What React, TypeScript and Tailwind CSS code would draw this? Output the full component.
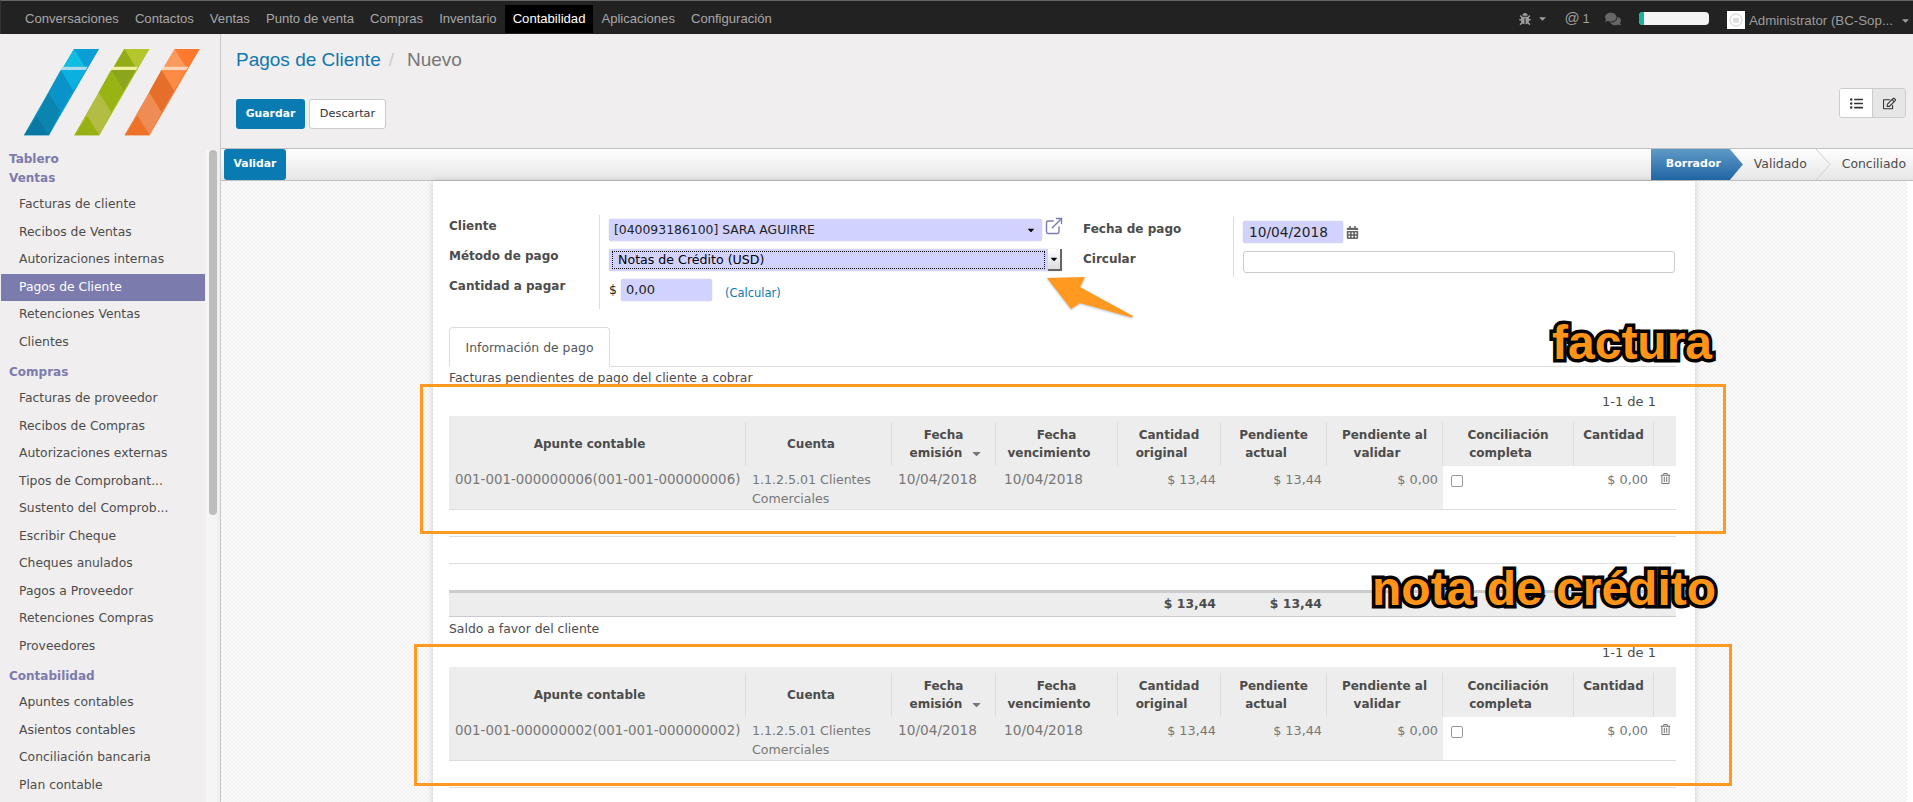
import { ExternalLink } from 'lucide-react'
import {
  FaBug,
  FaCalendarAlt,
  FaCaretDown,
  FaComments,
  FaListUl,
  FaRegEdit,
  FaRegTrashAlt,
} from 'react-icons/fa'

const topMenu = ['Conversaciones', 'Contactos', 'Ventas', 'Punto de venta', 'Compras', 'Inventario', 'Contabilidad', 'Aplicaciones', 'Configuración']

const sideMenu = [
  { title: 'Tablero', items: [] as string[] },
  { title: 'Ventas', items: ['Facturas de cliente', 'Recibos de Ventas', 'Autorizaciones internas', 'Pagos de Cliente', 'Retenciones Ventas', 'Clientes'] },
  {
    title: 'Compras',
    items: ['Facturas de proveedor', 'Recibos de Compras', 'Autorizaciones externas', 'Tipos de Comprobant...', 'Sustento del Comprob...', 'Escribir Cheque', 'Cheques anulados', 'Pagos a Proveedor', 'Retenciones Compras', 'Proveedores'],
  },
  { title: 'Contabilidad', items: ['Apuntes contables', 'Asientos contables', 'Conciliación bancaria', 'Plan contable'] },
]

// one stripe of the logo, drawn at the blue stripe's place and moved with dx
const LogoStripe = ({ dx, colors, band }: { dx: number; colors: string[]; band: string }) => (
  <g transform={`translate(${dx} 0)`}>
    <polygon points="162,15 237,15 87,274 12,274" fill={colors[4]} />
    <polygon points="162,15 237,15 203,68 195,68" fill={colors[1]} />
    <polygon points="162,15 195,68 130,68" fill={colors[0]} />
    <polygon points="122,78 197,78 160,140" fill={colors[2]} />
    <polygon points="122,78 160,140 122,205 85,145" fill={colors[3]} />
    <polygon points="85,145 122,205 87,274 50,215" fill={colors[5]} />
    <polygon points="50,215 87,274 12,274" fill={colors[6]} />
    <polygon points="85,145 50,215 12,274" fill={colors[7]} />
    <polygon points="128,68 203,68 197,78 122,78" fill={band} />
  </g>
)

const Logo = () => (
  <svg width="190" height="98" viewBox="0 0 570 294" className="ml-[19px] block">
    <LogoStripe dx={0} band="#a9dcea" colors={['#0fbde0', '#0a9dd6', '#0cb0e0', '#0a93c8', '#0aa2de', '#0a85b0', '#0a78a2', '#0a8cbc']} />
    <LogoStripe dx={151} band="#f0efa0" colors={['#93ab14', '#b4c52e', '#8ba61c', '#98b314', '#a6c01c', '#b3bd44', '#97b013', '#b2bd40']} />
    <LogoStripe dx={302} band="#fcd6b8" colors={['#fb9a5e', '#fd7a2d', '#fd8a45', '#e56f2a', '#f97c32', '#ef8c55', '#ee7129', '#ef8a50']} />
  </svg>
)

const Sidebar = () => (
  <div className="ml-px box-content w-[219px] shrink-0 border-r border-[#c8c8c8] bg-[#f0eeee] pt-[10px]">
    <Logo />
    <div className="mt-[8px] flex">
      <div className="w-[204px] shrink-0">
        {sideMenu.map((section, i) => (
          <div key={section.title} className={i > 1 ? 'pt-[7px]' : ''}>
            <div className="h-[19px] pl-[8px] text-[12px] leading-[19px] font-bold text-[#7c7bad]">{section.title}</div>
            {section.items.length > 0 && (
              <div className="mt-[3px]">
                {section.items.map((item) => (
                  <div
                    key={item}
                    className={
                      item === 'Pagos de Cliente'
                        ? 'h-[27.5px] bg-[#7c7bad] pl-[18px] text-[12.35px] leading-[27px] text-white'
                        : 'h-[27.5px] pl-[18px] text-[12.35px] leading-[27px] text-[#4c4c4c]'
                    }
                  >
                    {item}
                  </div>
                ))}
              </div>
            )}
          </div>
        ))}
      </div>
      <div className="ml-px h-[700px] w-[11px] bg-[#f6f5f5] pl-[3px]">
        <div className="h-[365px] w-[8px] rounded-[4px] bg-[#bdbdbd]" />
      </div>
    </div>
  </div>
)

const TopBar = () => (
  <div className="flex h-[34px] shrink-0 items-center border-t border-l border-[#666] border-l-[#333] bg-[#222] pt-[2px] pl-[16px] font-['Liberation_Sans',sans-serif] text-[13.1px] text-[#a8a8a8]">
    {topMenu.map((item) => (
      <div
        key={item}
        className={
          item === 'Contabilidad'
            ? 'flex h-[28px] items-center bg-black px-[8px] text-white'
            : 'flex h-[28px] items-center px-[8px]'
        }
      >
        {item}
      </div>
    ))}
    <div className="ml-auto flex items-center text-[#9d9d9d]">
      <FaBug size={12} />
      <FaCaretDown size={11} className="ml-[6px]" />
      <span className="ml-[16px] text-[15px]">@</span>
      <span className="ml-[3px]">1</span>
      <FaComments size={16} className="ml-[15px] text-[#666]" />
      <div className="ml-[18px] h-[13px] w-[70px] rounded-[4px] bg-[#f4f4f4]">
        <div className="h-[13px] w-[5px] rounded-l-[4px] bg-[#16b39a]" />
      </div>
      <div className="mt-[3px] ml-[18px] flex h-[18px] w-[18px] items-center justify-center bg-white">
        <svg width="14" height="14" viewBox="0 0 14 14">
          <circle cx="7" cy="7" r="6" fill="none" stroke="#e2e2e2" strokeWidth="1.5" />
          <rect x="4" y="5" width="6" height="4.5" fill="#dcdcdc" />
        </svg>
      </div>
      <span className="mt-[4px] ml-[4px] text-[13.3px]">Administrator (BC-Sop...</span>
      <FaCaretDown size={11} className="mt-[4px] mr-[2px] ml-[7px]" />
    </div>
  </div>
)

const ListCaret = () => <FaCaretDown size={10} className="text-black" />

const StatusBar = () => (
  <div className="flex h-[33px] shrink-0 items-center border-y border-[#c0c0c4] bg-gradient-to-b from-white to-[#e6e6e6]">
    <div className="ml-[3px] flex h-[31px] w-[62px] items-center justify-center rounded-[3px] bg-[#0a7ab3] text-[10.8px] font-bold text-white">
      Validar
    </div>
    <div className="ml-auto flex h-[31px] items-center text-[12.4px] text-[#4c4c4c]">
      <div className="flex h-[31px] w-[92px] items-center bg-gradient-to-b from-[#5f9ac6] to-[#1f65a4] pl-[15px] text-[11px] font-bold text-white [clip-path:polygon(0_0,calc(100%-13px)_0,100%_50%,calc(100%-13px)_100%,0_100%)]">
        Borrador
      </div>
      <span className="ml-[11px]">Validado</span>
      <svg width="16" height="31" viewBox="0 0 16 31" className="ml-[8px]">
        <polyline points="1,0 15,15.5 1,31" fill="none" stroke="#cfcfcf" />
      </svg>
      <span className="mr-[7px] ml-[11px]">Conciliado</span>
    </div>
  </div>
)

const PaymentForm = () => (
  <div className="flex pl-[16px]">
    <div className="mt-[34px] flex w-[634px] shrink-0">
      <div className="h-[94px] w-[151px] shrink-0 border-r border-[#ddd] text-[12px] font-bold text-[#4c4c4c]">
        <div className="h-[30px] leading-[22px]">Cliente</div>
        <div className="h-[30px] leading-[22px]">Método de pago</div>
        <div className="h-[30px] leading-[22px]">Cantidad a pagar</div>
      </div>
      <div className="pt-[4px] pl-[9px] text-[12.4px] text-[#222]">
        <div className="flex h-[30px] items-start">
          <div className="flex h-[22px] w-[433px] items-center justify-between rounded-[3px] bg-[#d2d2ff] pr-[6px] pl-[5px] shadow-[0_0_1px_#999]">
            [040093186100] SARA AGUIRRE
            <ListCaret />
          </div>
          <ExternalLink size={20} strokeWidth={1.7} className="-mt-[3px] ml-[2px] text-[#7c7bad]" />
        </div>
        <div className="flex h-[30px] items-start">
          <div className="flex h-[22px] w-[453px] items-center rounded-[3px] bg-[#d2d2ff] pl-[3px] shadow-[0_0_1px_#999]">
            <div className="h-[18px] w-[436px] border border-dotted border-black pl-[5px] text-[12.6px] leading-[16px] text-black">Notas de Crédito (USD)</div>
            <div className="ml-[3px] flex h-[22px] w-[14px] items-center justify-center border-r-2 border-b-2 border-[#666] bg-gradient-to-b from-white to-[#ddd]">
              <ListCaret />
            </div>
          </div>
        </div>
        <div className="flex h-[30px] items-start">
          <span className="w-[12px] leading-[22px]">$</span>
          <div className="h-[22px] w-[91px] rounded-[3px] bg-[#d2d2ff] pl-[5px] text-[13px] leading-[22px] shadow-[0_0_1px_#999]">0,00</div>
          <span className="ml-[13px] pt-[3px] text-[11.5px] leading-[22px] text-[#0a7ab3]">(Calcular)</span>
        </div>
      </div>
    </div>
    <div className="mt-[36px] flex">
      <div className="h-[60px] w-[151px] shrink-0 border-r border-[#ddd] text-[12px] font-bold text-[#4c4c4c]">
        <div className="h-[30px] leading-[24px]">Fecha de pago</div>
        <div className="h-[30px] leading-[24px]">Circular</div>
      </div>
      <div className="pt-[4px] pl-[9px] text-[13.7px] text-[#222]">
        <div className="flex h-[30px] items-start">
          <div className="h-[22px] w-[100px] rounded-[3px] bg-[#d2d2ff] pl-[6px] leading-[22px] shadow-[0_0_1px_#999]">10/04/2018</div>
          <FaCalendarAlt size={13} className="mt-[5px] ml-[3px] text-[#666]" />
        </div>
        <div className="h-[22px] w-[432px] rounded-[3px] border border-[#ccc] bg-white" />
      </div>
    </div>
  </div>
)

const colWidths = ['w-[297px]', 'w-[146px]', 'w-[104px]', 'w-[122px]', 'w-[103px]', 'w-[106px]', 'w-[116px]', 'w-[131px]', 'w-[80px]', 'w-[22px]']

const SortSlot = ({ show }: { show?: boolean }) => (
  <span className="ml-[4px] inline-block w-[11px] align-middle">
    {show && <FaCaretDown size={13} className="ml-[4px] text-[#777]" />}
  </span>
)

const HeadCell = ({ first, second, sort, last }: { first: string; second?: string; sort?: boolean; last?: boolean }) => (
  <th className="h-[50px] bg-[#ededed] p-0 font-bold">
    <div className={last ? 'mt-[6px] h-[44px]' : 'mt-[6px] flex h-[44px] flex-col justify-center border-r border-[#dcdcdc]'}>
      {second ? (
        <div className="text-center leading-[18px]">
          {first}
          <br />
          {second}
          <SortSlot show={sort} />
        </div>
      ) : (
        !last && (
          <div className="text-center leading-[18px]">
            {first}
            <SortSlot />
          </div>
        )
      )}
    </div>
  </th>
)

const PaymentTable = ({ docNumber, emptyRows, totals }: { docNumber: string; emptyRows: number; totals?: boolean }) => {
  const grey = 'h-[44px] border-b border-[#ddd] bg-[#ededed] p-0 pt-[4px] align-top leading-[19px] text-[#777]'
  const white = 'h-[44px] border-b border-[#ddd] bg-white p-0 pt-[4px] align-top leading-[19px] text-[#777]'

  return (
    <table className="w-[1227px] table-fixed border-separate border-spacing-0 text-[12px] text-[#4c4c4c]">
      <colgroup>
        {colWidths.map((width) => (
          <col key={width} className={width} />
        ))}
      </colgroup>
      <thead>
        <tr>
          <HeadCell first="Apunte contable" />
          <HeadCell first="Cuenta" />
          <HeadCell first="Fecha" second="emisión" sort />
          <HeadCell first="Fecha" second="vencimiento" />
          <HeadCell first="Cantidad" second="original" />
          <HeadCell first="Pendiente" second="actual" />
          <HeadCell first="Pendiente al" second="validar" />
          <HeadCell first="Conciliación" second="completa" />
          <th className="h-[50px] bg-[#ededed] p-0 font-bold">
            <div className="mt-[6px] h-[44px] border-r border-[#dcdcdc] pt-[4px] text-center leading-[18px]">Cantidad</div>
          </th>
          <HeadCell first="" last />
        </tr>
      </thead>
      <tbody>
        <tr>
          <td className={`${grey} pl-[6px] text-[13.4px] whitespace-nowrap`}>
            {docNumber}({docNumber})
          </td>
          <td className={`${grey} pl-[6px] text-[12.6px]`}>
            1.1.2.5.01 Clientes
            <br />
            Comerciales
          </td>
          <td className={`${grey} pl-[6px] text-[13.7px]`}>10/04/2018</td>
          <td className={`${grey} pl-[8px] text-[13.7px]`}>10/04/2018</td>
          <td className={`${grey} pr-[5px] text-right text-[12.8px]`}>$ 13,44</td>
          <td className={`${grey} pr-[5px] text-right text-[12.8px]`}>$ 13,44</td>
          <td className={`${grey} pr-[5px] text-right text-[12.8px]`}>$ 0,00</td>
          <td className={`${white} pl-[8px]`}>
            <div className="mt-[5px] h-[12px] w-[12px] rounded-[2px] border border-[#999] bg-white" />
          </td>
          <td className={`${white} pr-[6px] text-right text-[12.8px]`}>$ 0,00</td>
          <td className={`${white} pl-[6px]`}>
            <FaRegTrashAlt size={11} className="mt-[3px] text-[#777]" />
          </td>
        </tr>
        {Array.from({ length: emptyRows }).map((_, i) => (
          <tr key={i}>
            <td colSpan={10} className="h-[27px] border-b border-[#ddd] p-0" />
          </tr>
        ))}
      </tbody>
      {totals && (
        <tfoot>
          <tr>
            <td colSpan={10} className="h-[26px] p-0" />
          </tr>
          <tr className="bg-[#ededed] text-[12.4px] font-bold">
            <td colSpan={4} className="h-[27px] border-t-[3px] border-b border-t-[#ccc] border-b-[#ccc] p-0" />
            <td className="border-t-[3px] border-b border-t-[#ccc] border-b-[#ccc] p-0 pr-[5px] text-right">$ 13,44</td>
            <td className="border-t-[3px] border-b border-t-[#ccc] border-b-[#ccc] p-0 pr-[5px] text-right">$ 13,44</td>
            <td colSpan={4} className="border-t-[3px] border-b border-t-[#ccc] border-b-[#ccc] p-0" />
          </tr>
        </tfoot>
      )}
    </table>
  )
}

const Pager = () => <div className="mt-[4px] mb-[4px] h-[20px] pr-[20px] text-right text-[13px] leading-[20px] text-[#4c4c4c]">1-1 de 1</div>

const Sheet = () => (
  <div className="ml-[212px] h-[640px] w-[1262px] shrink-0 bg-white shadow-[0_0_6px_rgba(0,0,0,0.18)]">
    <PaymentForm />
    <div className="mt-[18px] ml-[16px] flex h-[40px] w-[1227px] border-b border-[#ddd]">
      <div className="h-[40px] w-[161px] rounded-t-[4px] border border-[#ddd] border-b-white bg-white text-center text-[12.4px] leading-[40px] text-[#555]">
        Información de pago
      </div>
    </div>
    <div className="ml-[16px] w-[1227px]">
      <div className="mt-px h-[20px] text-[12.4px] leading-[20px] text-[#4c4c4c]">Facturas pendientes de pago del cliente a cobrar</div>
      <Pager />
      <PaymentTable docNumber="001-001-000000006" emptyRows={2} totals />
      <div className="mt-[2px] h-[20px] text-[12.4px] leading-[20px] text-[#4c4c4c]">Saldo a favor del cliente</div>
      <div className="mt-[2px]">
        <Pager />
      </div>
      <PaymentTable docNumber="001-001-000000002" emptyRows={1} />
    </div>
  </div>
)

const Annotations = () => (
  <>
    <div className="absolute top-[384px] left-[420px] h-[150px] w-[1306px] border-[3px] border-[#ff9922]" />
    <div className="absolute top-[644px] left-[414px] h-[142px] w-[1318px] border-[3px] border-[#ff9922]" />
    <svg width="100" height="56" viewBox="0 0 100 56" className="absolute top-[270px] left-[1042px] drop-shadow-[0_1px_1px_rgba(0,0,0,0.25)]">
      <polygon points="5,8 43,7 38,17 91,46 90,47.5 38,33 29,39" fill="#ff9920" />
    </svg>
    <div className="absolute top-[317px] left-[1552px] font-['Liberation_Sans',sans-serif] text-[48px] leading-[52px] font-bold text-[#ff9417] [-webkit-text-stroke:7px_#000] [paint-order:stroke_fill]">
      factura
    </div>
    <div className="absolute top-[563px] left-[1372px] font-['Liberation_Sans',sans-serif] text-[48px] leading-[52px] font-bold whitespace-nowrap text-[#ff9417] [-webkit-text-stroke:7px_#000] [paint-order:stroke_fill]">
      nota de crédito
    </div>
  </>
)

const App = () => (
  <div className="relative flex h-[802px] w-[1913px] flex-col overflow-hidden bg-[#f0eeee] font-['DejaVu_Sans',sans-serif]">
    <TopBar />
    <div className="flex min-h-0 flex-1">
      <Sidebar />
      <div className="flex min-w-0 flex-1 flex-col">
        <div className="flex h-[114px] shrink-0 justify-between pr-[7px] pl-[15px]">
          <div>
            <div className="mt-[14px] flex h-[24px] items-center font-['Liberation_Sans',sans-serif] text-[19px]">
              <span className="text-[#1276ae]">Pagos de Cliente</span>
              <span className="ml-[8px] text-[#ccc]">/</span>
              <span className="ml-[13px] text-[#777]">Nuevo</span>
            </div>
            <div className="mt-[27px] flex gap-[4px] text-[11.3px]">
              <div className="flex h-[30px] w-[69px] items-center justify-center rounded-[3px] bg-[#0a7ab3] pt-px text-[10.8px] font-bold text-white">Guardar</div>
              <div className="flex h-[30px] w-[77px] items-center justify-center rounded-[3px] border border-[#ccc] bg-white pt-px text-[#333]">Descartar</div>
            </div>
          </div>
          <div className="mt-[54px] flex h-[30px] w-[67px] overflow-hidden rounded-[3px] border border-[#ccc] text-[#333]">
            <div className="flex flex-1 items-center justify-center bg-white">
              <FaListUl size={13} />
            </div>
            <div className="flex flex-1 items-center justify-center border-l border-[#ccc] bg-[#e6e6e6]">
              <FaRegEdit size={13} />
            </div>
          </div>
        </div>
        <StatusBar />
        <div className="flex min-h-0 flex-1 bg-[repeating-conic-gradient(#f1f1f1_0%_25%,#fbfbfb_0%_50%)] bg-[length:4px_4px]">
          <Sheet />
          <div className="ml-auto h-full w-[6px] bg-white" />
        </div>
      </div>
    </div>
    <Annotations />
  </div>
)

export default App
